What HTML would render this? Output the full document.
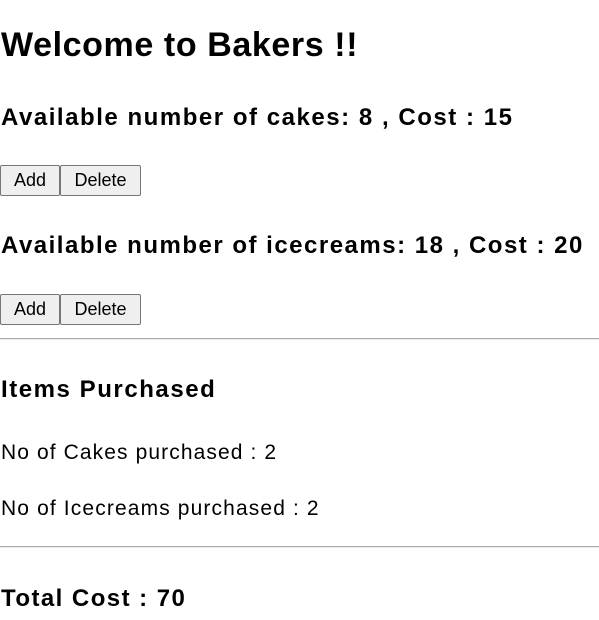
<!DOCTYPE html>
<html><head><style>
body{margin:0;width:599px;height:620px;overflow:hidden;background:#fff;font-family:"Liberation Sans",sans-serif;color:#000;position:relative}
.a{position:absolute;left:1px;white-space:nowrap;line-height:1}
.h1{font-size:34px;font-weight:bold;top:28px;letter-spacing:0.6px}
.h3{font-size:24px;font-weight:bold}
.p{font-size:21px;letter-spacing:1.1px}
button{position:absolute;height:31px;font-family:"Liberation Sans",sans-serif;font-size:18px;background:#efefef;border:1px solid #767676;border-radius:2px;padding:0;color:#000}
hr{position:absolute;left:0;width:599px;margin:0;border:0;border-top:1px solid #aaa;border-bottom:1px solid #eee;height:0}
</style></head><body>
<div class="a h1">Welcome to Bakers !!</div>
<div class="a h3" style="top:106px;letter-spacing:1.53px">Available number of cakes: 8 , Cost : 15</div>
<button style="left:0;top:165px;width:60px">Add</button>
<button style="left:60px;top:165px;width:81px">Delete</button>
<div class="a h3" style="top:234px;letter-spacing:1.5px">Available number of icecreams: 18 , Cost : 20</div>
<button style="left:0;top:294px;width:60px">Add</button>
<button style="left:60px;top:294px;width:81px">Delete</button>
<hr style="top:338px">
<div class="a h3" style="top:378px;letter-spacing:1.55px">Items Purchased</div>
<div class="a p" style="top:442px">No of Cakes purchased : 2</div>
<div class="a p" style="top:498px;letter-spacing:1.13px">No of Icecreams purchased : 2</div>
<hr style="top:546px">
<div class="a h3" style="top:587px;letter-spacing:1.45px">Total Cost : 70</div>
</body></html>
